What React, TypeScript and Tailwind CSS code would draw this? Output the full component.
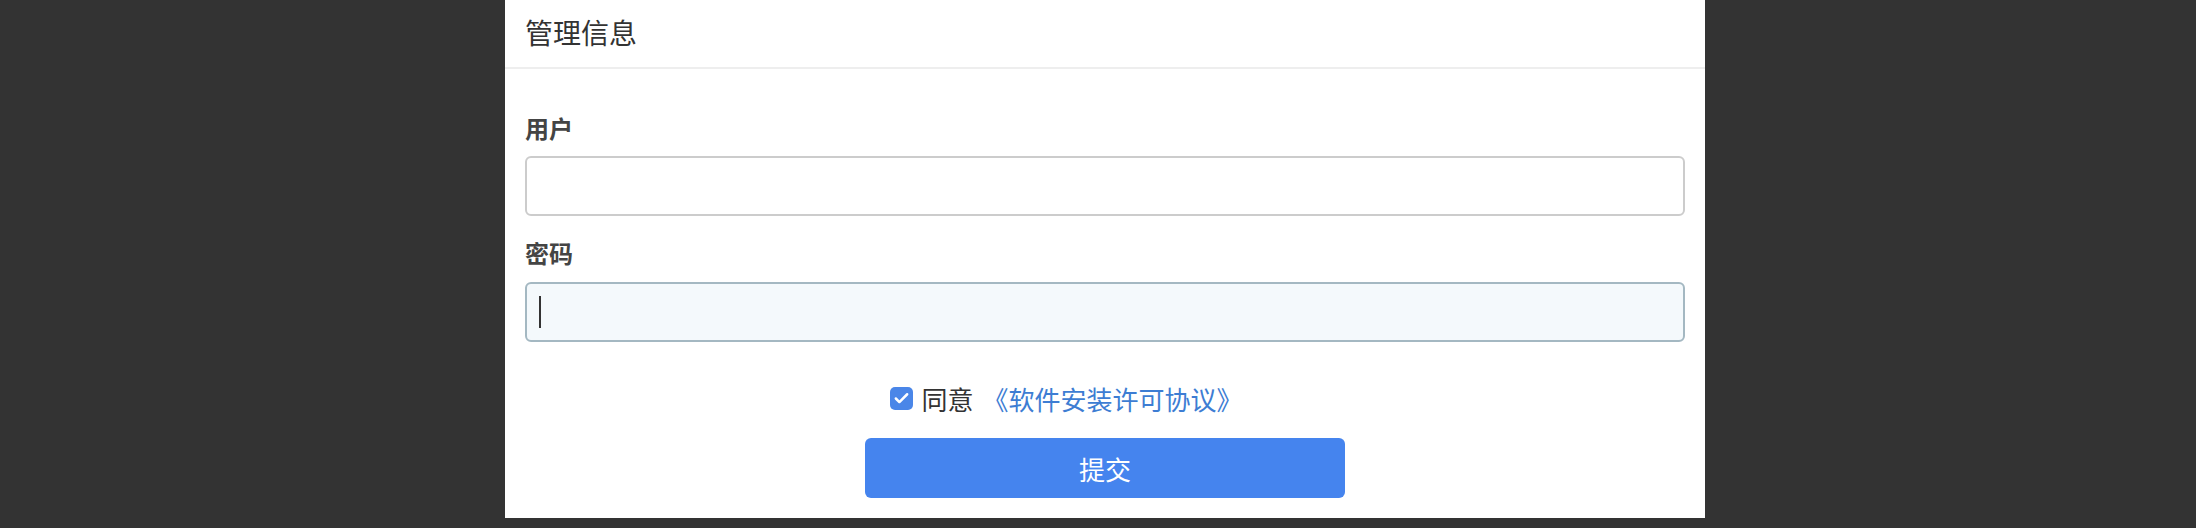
import { Check } from "lucide-react";

const font = { fontFamily: '"Noto Sans CJK SC", "Noto Sans", sans-serif' };

export default function App() {
  return (
    <div className="w-[2196px] h-[528px] bg-[#333333] flex justify-center pl-[14px]" style={font}>
      <div className="w-[1200px] h-[518px] bg-white flex flex-col">
        <div className="h-[70px] flex items-center px-5 pb-[4px] border-b-2 border-[#eeeeee] text-[28px] text-[#333]">
          管理信息
        </div>

        <form className="flex flex-col px-5 pt-[41px] pb-5" onSubmit={e => e.preventDefault()}>
          <label className="text-[24px] leading-[36px] font-bold text-[#444]">用户</label>
          <input
            type="text"
            className="mt-[10px] h-[60px] w-full rounded-md border-2 border-[#cccccc] bg-white px-3 text-[22px] outline-none"
          />

          <label className="mt-[19px] text-[24px] leading-[36px] font-bold text-[#444]">密码</label>
          <div className="relative mt-[11px]">
            <input
              type="password"
              className="h-[60px] w-full rounded-md border-2 border-[#a4b8c2] bg-[#f4f9fc] px-3 text-[22px] outline-none"
            />
            <span className="absolute left-[14px] top-[14px] h-[32px] w-[2px] bg-[#333]" />
          </div>

          <div className="mt-[38px] h-[36px] flex items-center justify-center pr-[77px] text-[26px]">
            <span className="w-[23px] h-[23px] rounded-[5px] bg-[#4a86e8] flex items-center justify-center mr-[8px]">
              <Check size={17} strokeWidth={3.5} className="text-white" />
            </span>
            <span className="text-[#333]">同意</span>
            <a className="ml-[9px] text-[#3d7dd3]">《软件安装许可协议》</a>
          </div>

          <button
            type="submit"
            className="mt-[22px] mx-auto w-[480px] h-[60px] rounded-md bg-[#4584ee] text-white text-[26px]"
          >
            提交
          </button>
        </form>
      </div>
    </div>
  );
}
